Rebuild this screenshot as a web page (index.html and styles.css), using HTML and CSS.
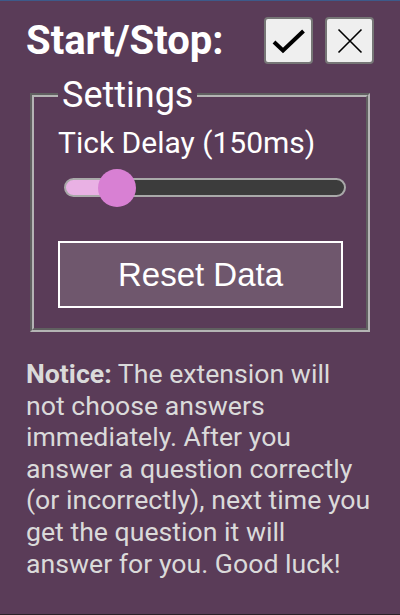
FILE: index.html
```html
<!DOCTYPE html>
<html lang="en">
<head>
<meta charset="utf-8">
<title>Popup</title>
<link rel="stylesheet" href="styles.css">
</head>
<body>
<div class="page">
  <div class="header">
    <h1 class="title">Start/Stop:</h1>
    <div class="actions">
      <button class="icon-btn" aria-label="Start">
        <svg width="34" height="26" viewBox="0 0 34 26"><path d="M2 14 L11 22.5 L31.5 3" fill="none" stroke="#000" stroke-width="4" stroke-linejoin="miter" stroke-linecap="butt"/></svg>
      </button>
      <button class="icon-btn" aria-label="Stop">
        <svg width="26" height="26" viewBox="0 0 26 26"><path d="M1.5 1.5 L24.5 24.5 M24.5 1.5 L1.5 24.5" fill="none" stroke="#000" stroke-width="1.6"/></svg>
      </button>
    </div>
  </div>
  <fieldset class="settings">
    <legend class="legend">Settings</legend>
    <label class="label" for="delay">Tick Delay (150ms)</label>
    <input id="delay" class="slider" type="range" min="10" max="1000" value="144" style="--fill: 14%;">
    <button class="reset">Reset Data</button>
  </fieldset>
  <p class="notice"><b>Notice:</b> The extension will not choose answers immediately. After you answer a question correctly (or incorrectly), next time you get the question it will answer for you. Good luck!</p>
</div>
</body>
</html>
```
FILE: styles.css
```css
html, body {
  margin: 0;
  padding: 0;
}
body {
  background: #5a3c58;
  font-family: Roboto, "Liberation Sans", sans-serif;
}
.page {
  box-sizing: border-box;
  width: 400px;
  height: 615px;
  padding: 16px 26px 0;
  border-top: 1px solid #3d5a8a;
  border-bottom: 1px solid #2a2228;
  overflow: hidden;
}
.header {
  display: flex;
  align-items: center;
  justify-content: space-between;
}
.title {
  margin: 0;
  font-size: 40px;
  font-weight: 700;
  color: #fff;
  line-height: 47px;
}
.actions {
  display: flex;
  gap: 12px;
}
.icon-btn {
  box-sizing: border-box;
  width: 49px;
  height: 47px;
  padding: 0;
  margin: 0;
  background: #efefef;
  border: 2px solid #767676;
  border-radius: 4px;
  display: flex;
  align-items: center;
  justify-content: center;
}
.settings {
  margin: 10px 4px 0;
  padding: 0 24px 20px;
  border: 4px groove #b4b4b4;
  min-width: 0;
}
.legend {
  font-size: 36px;
  color: #fff;
  padding: 0 4px;
  line-height: 42px;
}
.label {
  display: block;
  margin-top: 9px;
  font-size: 30px;
  line-height: 35px;
  color: #fff;
}
.slider {
  -webkit-appearance: none;
  appearance: none;
  display: block;
  box-sizing: border-box;
  width: 282px;
  height: 19px;
  margin: 18px 0 0 6px;
  padding: 0;
  border: 2px solid #a9a9a9;
  border-radius: 10px;
  background: linear-gradient(to right, #e9b1e4 0, #e9b1e4 var(--fill), #3c3c3c var(--fill), #3c3c3c 100%);
  outline: none;
}
.slider::-webkit-slider-thumb {
  -webkit-appearance: none;
  appearance: none;
  width: 38px;
  height: 38px;
  border-radius: 50%;
  background: #d880d3;
  border: none;
}
.reset {
  display: block;
  box-sizing: border-box;
  width: 285px;
  height: 67px;
  margin-top: 44px;
  background: #6f576d;
  border: 2px solid #fff;
  color: #fff;
  font-family: "Liberation Sans", Arial, sans-serif;
  font-size: 33px;
  padding: 0;
}
.notice {
  margin: 27px 0 0;
  font-size: 26.667px;
  line-height: 31.6px;
  color: #dadada;
}
.notice b {
  font-weight: 700;
}
```
